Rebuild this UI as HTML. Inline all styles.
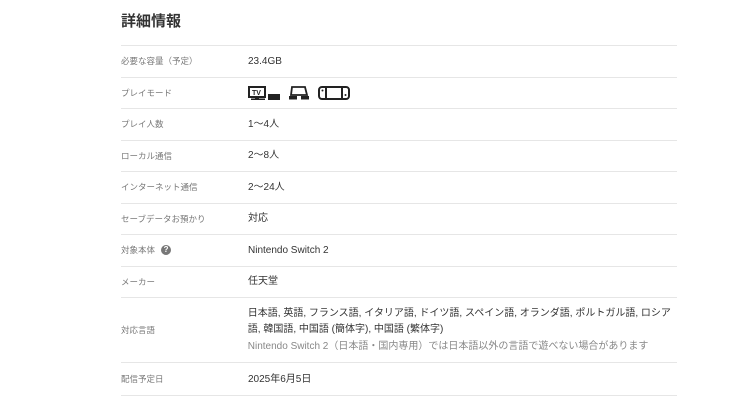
<!DOCTYPE html>
<html><head><meta charset="utf-8"><style>
body{margin:0;background:#fff;width:747px;height:400px;overflow:hidden;font-family:"Liberation Sans","Noto Sans CJK JP",sans-serif;}
h2{position:absolute;left:121px;top:10px;margin:0;font-size:15px;font-weight:bold;color:#333;}
.t{position:absolute;left:121px;top:45px;width:556px;border-top:1px solid #e6e6e6;}
.r{display:flex;align-items:center;border-bottom:1px solid #e6e6e6;height:30.5px;}
.l{width:127px;font-size:8.5px;color:#777;display:flex;align-items:center;line-height:12px;}
.v{font-size:10px;color:#333;line-height:12px;padding-top:1px;}
.q{display:inline-block;width:10px;height:10px;border-radius:50%;background:#777;color:#fff;font-size:8px;line-height:10px;text-align:center;margin-left:6px;font-weight:bold;}
.n{color:#888;}
</style></head><body>
<h2>詳細情報</h2>
<div class="t">
<div class="r"><div class="l">必要な容量（予定）</div><div class="v">23.4GB</div></div>
<div class="r"><div class="l">プレイモード</div><div class="v" style="display:flex;align-items:center;gap:8px">
<svg width="32" height="14" viewBox="0 0 32 14"><rect x="1" y="1" width="16" height="10" fill="none" stroke="#222" stroke-width="2"/><text x="4" y="9" font-size="7" font-weight="bold" fill="#222" font-family="Liberation Sans">TV</text><rect x="7" y="11" width="4" height="2" fill="#222"/><rect x="3" y="12.5" width="14" height="1.5" fill="#222"/><rect x="20" y="8" width="12" height="6" fill="#222"/></svg>
<svg width="22" height="14" viewBox="0 0 22 14"><path d="M4 1h13l2 8H3z" fill="none" stroke="#222" stroke-width="1.8"/><rect x="1" y="10" width="8" height="3.5" fill="#222"/><rect x="13" y="10" width="8" height="3.5" fill="#222"/></svg>
<svg width="32" height="14" viewBox="0 0 32 14"><rect x="1" y="1" width="30" height="12" rx="3" fill="none" stroke="#222" stroke-width="2"/><rect x="8" y="1" width="16" height="12" fill="#fff" stroke="#222" stroke-width="2"/><circle cx="4.5" cy="4.5" r="1" fill="#222"/><circle cx="27.5" cy="9" r="1" fill="#222"/></svg>
</div></div>
<div class="r"><div class="l">プレイ人数</div><div class="v">1～4人</div></div>
<div class="r"><div class="l">ローカル通信</div><div class="v">2～8人</div></div>
<div class="r"><div class="l">インターネット通信</div><div class="v">2～24人</div></div>
<div class="r"><div class="l">セーブデータお預かり</div><div class="v">対応</div></div>
<div class="r"><div class="l">対象本体<span class="q">?</span></div><div class="v">Nintendo Switch 2</div></div>
<div class="r"><div class="l">メーカー</div><div class="v">任天堂</div></div>
<div class="r" style="height:64px"><div class="l">対応言語</div><div class="v" style="width:430px;line-height:16.5px">日本語, 英語, フランス語, イタリア語, ドイツ語, スペイン語, オランダ語, ポルトガル語, ロシア<br>語, 韓国語, 中国語 (簡体字), 中国語 (繁体字)<br><span class="n">Nintendo Switch 2（日本語・国内専用）では日本語以外の言語で遊べない場合があります</span></div></div>
<div class="r" style="height:32px"><div class="l">配信予定日</div><div class="v">2025年6月5日</div></div>
</div>
</body></html>
